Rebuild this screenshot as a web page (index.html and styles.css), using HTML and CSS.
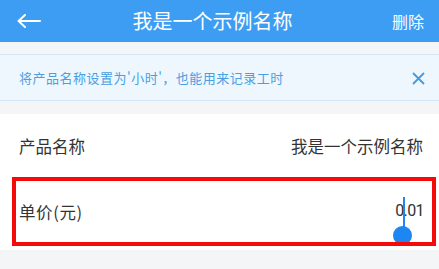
FILE: index.html
```html
<!DOCTYPE html>
<html lang="zh-CN">
<head>
<meta charset="utf-8">
<link rel="stylesheet" href="styles.css">
</head>
<body>
<header class="topbar">
  <span class="back">
    <svg width="24" height="14" viewBox="0 0 24 14"><path d="M1.5 7H23M8 1L1.5 7L8 13" fill="none" stroke="#fff" stroke-width="2" stroke-linecap="round" stroke-linejoin="round"/></svg>
  </span>
  <h1 class="title">我是一个示例名称</h1>
  <span class="action">删除</span>
</header>
<div class="tip">
  <span class="tip-text">将产品名称设置为'小时'，也能用来记录工时</span>
  <svg class="close" width="13" height="13" viewBox="0 0 13 13"><path d="M1 1L12 12M12 1L1 12" fill="none" stroke="#3d9be8" stroke-width="1.8"/></svg>
</div>
<section class="form">
  <div class="row">
    <span class="label">产品名称</span>
    <span class="value">我是一个示例名称</span>
  </div>
  <div class="row row-focus">
    <span class="label paren">单价(元)</span>
    <span class="value num">0.01</span>
    <span class="caret"></span>
    <span class="handle"></span>
  </div>
</section>
</body>
</html>
```
FILE: styles.css
```css
html, body {
  margin: 0;
  padding: 0;
}
body {
  width: 439px;
  height: 269px;
  background: #f4f5f7;
  font-family: "Noto Sans CJK SC", "Noto Sans", sans-serif;
  overflow: hidden;
}
.topbar {
  height: 42px;
  background: #3d9df2;
  display: flex;
  align-items: center;
  position: relative;
  color: #fff;
}
.back {
  width: 24px;
  height: 14px;
  margin-left: 17px;
  display: flex;
}
.title {
  flex: 1;
  margin: 0;
  text-align: center;
  font-size: 20px;
  font-weight: normal;
  line-height: 42px;
  margin-left: -2px;
  padding-right: 6px;
}
.action {
  font-size: 16px;
  margin-right: 15px;
  line-height: 42px;
}
.tip {
  margin-top: 12px;
  height: 45px;
  background: #eef7fd;
  border-top: 1px solid #d3e6f4;
  border-bottom: 1px solid #d3e6f4;
  display: flex;
  align-items: center;
  justify-content: space-between;
  padding: 0 14px 0 19px;
}
.tip-text {
  font-size: 13px;
  letter-spacing: 0.5px;
  color: #4a9fe2;
}
.close {
  display: block;
  margin-top: 1px;
}
.form {
  margin-top: 13px;
  background: #fff;
  padding-bottom: 4px;
}
.row {
  display: flex;
  align-items: center;
  justify-content: space-between;
  height: 63px;
  padding: 0 16px 0 19px;
  font-size: 16.5px;
  color: #333;
}
.row .value {
  color: #333;
}
.paren {
  letter-spacing: 0.6px;
}
.row-focus {
  height: 61px;
  margin: 0 3px 0 12px;
  border: 4px solid #f50a0a;
  padding: 0 8px 0 3px;
  position: relative;
  overflow: hidden;
}
.num {
  font-family: "Roboto", sans-serif;
  font-size: 16px;
  letter-spacing: -0.6px;
  margin-top: -2px;
}
.caret {
  position: absolute;
  left: 387px;
  top: 16px;
  width: 2px;
  height: 38px;
  background: #1e86f0;
}
.handle {
  position: absolute;
  left: 377px;
  top: 45px;
  width: 19px;
  height: 19px;
  border-radius: 50%;
  background: #1e86f0;
}
```
